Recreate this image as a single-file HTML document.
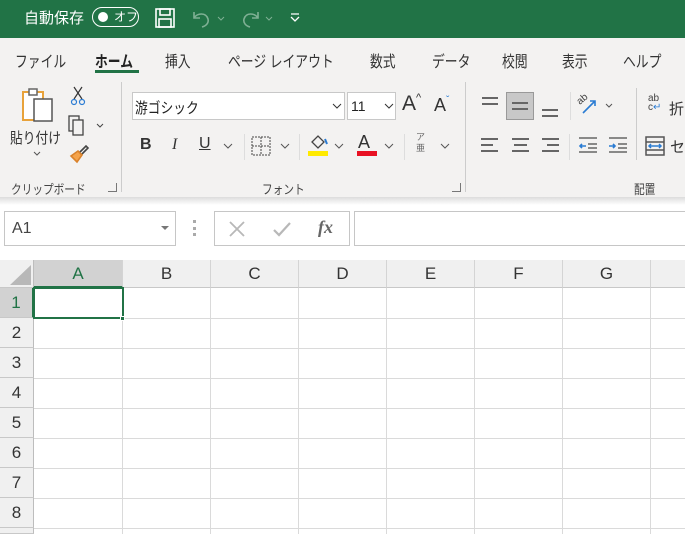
<!DOCTYPE html>
<html><head><meta charset="utf-8"><style>
*{margin:0;padding:0;box-sizing:border-box}
html,body{width:685px;height:534px;overflow:hidden}
body{background:#fff;font-family:"Liberation Sans","Noto Sans CJK JP",sans-serif;position:relative;color:#262626}
.a{position:absolute;white-space:nowrap}
.t{font-size:16px;color:#333;transform:scaleX(0.8);transform-origin:left top}
.g{font-size:13px;color:#444;transform:scaleX(0.82);transform-origin:left top}
.ch{position:absolute;top:260px;height:28px;border-right:1px solid #d4d4d4;border-bottom:1px solid #c8c8c8;background:#f0f0f0;font-size:17px;text-align:center;line-height:28px;color:#333}
.rh{position:absolute;left:0;width:34px;height:30px;border-bottom:1px solid #c8c8c8;border-right:1px solid #bdbdbd;background:#f0f0f0;font-size:17px;text-align:center;line-height:30px;color:#333}
.hl{position:absolute;left:34px;right:0;height:1px;background:#dadada}
.vl{position:absolute;top:288px;height:246px;width:1px;background:#dadada}
.bar{position:absolute;height:2px;background:#666}
</style></head><body>
<div class="a" style="left:0;top:0;width:685px;height:38px;background:#217346"></div>
<div class="a" style="left:24px;top:7px;color:#fff;font-size:15px">自動保存</div>
<div class="a" style="left:92px;top:7px;width:47px;height:20px;border:1.5px solid #fff;border-radius:10px"></div>
<div class="a" style="left:98px;top:12px;width:10px;height:10px;border-radius:5px;background:#fff"></div>
<div class="a" style="left:114px;top:8px;color:#fff;font-size:12px">オフ</div>
<svg class="a" style="left:154px;top:7px" width="22" height="22" viewBox="0 0 22 22" fill="none" stroke="#fff" stroke-width="1.6"><rect x="2" y="2" width="18" height="18"/><rect x="6" y="2" width="10" height="6"/><rect x="5" y="12" width="12" height="8"/></svg>
<svg class="a" style="left:190px;top:8px" width="40" height="20" fill="none" stroke="#7fb094" stroke-width="1.6"><path d="M4 4v6h6M4 10c3-5 12-6 14 1 1 4-2 7-6 8"/><path d="M28 9l3 3 3-3" stroke-width="1"/></svg>
<svg class="a" style="left:238px;top:8px" width="40" height="20" fill="none" stroke="#7fb094" stroke-width="1.6"><path d="M20 4v6h-6M20 10c-3-5-12-6-14 1-1 4 2 7 6 8"/><path d="M28 9l3 3 3-3" stroke-width="1"/></svg>
<svg class="a" style="left:289px;top:12px" width="12" height="12" fill="none" stroke="#fff" stroke-width="1.3"><path d="M2 2h8M2 5l4 4 4-4"/></svg>
<div class="a" style="left:0;top:38px;width:685px;height:162px;background:#f3f2f1"></div>
<div class="a" style="left:0;top:197px;width:685px;height:8px;background:linear-gradient(#dcdcdc,#fff)"></div>
<div class="a t" style="left:15px;top:48px">ファイル</div>
<div class="a t" style="left:95px;top:48px;font-weight:bold;color:#222">ホーム</div>
<div class="a" style="left:95px;top:70px;width:44px;height:3px;background:#217346"></div>
<div class="a t" style="left:165px;top:48px">挿入</div>
<div class="a t" style="left:228px;top:48px">ページ レイアウト</div>
<div class="a t" style="left:370px;top:48px">数式</div>
<div class="a t" style="left:432px;top:48px">データ</div>
<div class="a t" style="left:502px;top:48px">校閲</div>
<div class="a t" style="left:562px;top:48px">表示</div>
<div class="a t" style="left:623px;top:48px">ヘルプ</div>
<svg class="a" style="left:20px;top:86px" width="40" height="38" fill="none"><rect x="3" y="6" width="20" height="28" stroke="#e8a23a" stroke-width="2" fill="#fff"/><rect x="9" y="3" width="8" height="6" stroke="#666" stroke-width="1.5" fill="#fff"/><rect x="14" y="13" width="18" height="22" stroke="#555" stroke-width="1.5" fill="#fff"/></svg>
<div class="a" style="left:10px;top:127px;font-size:15px;color:#333;transform:scaleX(0.85);transform-origin:left top">貼り付け</div>
<svg class="a" style="left:32px;top:150px" width="10" height="8" fill="none" stroke="#555"><path d="M2 2l3 3 3-3"/></svg>
<svg class="a" style="left:70px;top:86px" width="16" height="20" fill="none" stroke="#333" stroke-width="1.2"><path d="M4 1l8 12M12 1l-8 12"/><circle cx="4" cy="16" r="2.5" stroke="#2b7cd3"/><circle cx="12" cy="16" r="2.5" stroke="#2b7cd3"/></svg>
<svg class="a" style="left:68px;top:115px" width="40" height="22" fill="none" stroke="#444" stroke-width="1.3"><rect x="1" y="1" width="10" height="15"/><rect x="5" y="5" width="10" height="15" fill="#f3f2f1"/><path d="M29 9l3 3 3-3" stroke-width="1"/></svg>
<svg class="a" style="left:68px;top:144px" width="22" height="20" fill="none" stroke-width="1.6"><path d="M12 8l6-6 2 2-6 6" stroke="#444"/><path d="M3 12l7-5 4 4-5 7z" fill="#f5a34a" stroke="#d9822b"/></svg>
<div class="a g" style="left:11px;top:179px">クリップボード</div>
<div class="a" style="left:108px;top:183px;width:9px;height:9px;border:1px solid #777;border-width:0 1px 1px 0"></div>
<div class="a" style="left:121px;top:82px;width:1px;height:110px;background:#ccc"></div>
<div class="a" style="left:132px;top:92px;width:213px;height:28px;background:#fff;border:1px solid #c8c8c8"></div>
<div class="a" style="left:135px;top:97px;font-size:15px;color:#222;transform:scaleX(0.85);transform-origin:left top">游ゴシック</div>
<svg class="a" style="left:332px;top:102px" width="10" height="8" fill="none" stroke="#333"><path d="M1 2l4 4 4-4"/></svg>
<div class="a" style="left:347px;top:92px;width:49px;height:28px;background:#fff;border:1px solid #c8c8c8"></div>
<div class="a" style="left:351px;top:98px;font-size:14px;color:#222">11</div>
<svg class="a" style="left:384px;top:102px" width="10" height="8" fill="none" stroke="#333"><path d="M1 2l4 4 4-4"/></svg>
<div class="a" style="left:402px;top:92px;font-size:21px;color:#333">A<span style="font-size:11px;vertical-align:top">^</span></div>
<div class="a" style="left:434px;top:95px;font-size:18px;color:#333">A<span style="font-size:10px;vertical-align:top;color:#2b7cd3">ˇ</span></div>
<div class="a" style="left:140px;top:136px;font-size:16px;font-weight:bold;color:#333">B</div>
<div class="a" style="left:172px;top:136px;font-size:16px;font-style:italic;font-family:'Liberation Serif',serif;color:#333">I</div>
<div class="a" style="left:199px;top:135px;font-size:16px;text-decoration:underline;color:#333">U</div>
<svg class="a" style="left:223px;top:142px" width="10" height="8" fill="none" stroke="#555"><path d="M1 2l4 4 4-4"/></svg>
<div class="a" style="left:244px;top:134px;width:1px;height:26px;background:#ddd"></div>
<svg class="a" style="left:251px;top:136px" width="20" height="20" fill="none" stroke="#444" stroke-dasharray="2 1"><rect x="1" y="1" width="18" height="18"/><path d="M10 1v18M1 10h18"/></svg>
<svg class="a" style="left:280px;top:142px" width="10" height="8" fill="none" stroke="#555"><path d="M1 2l4 4 4-4"/></svg>
<div class="a" style="left:299px;top:134px;width:1px;height:26px;background:#ddd"></div>
<svg class="a" style="left:308px;top:133px" width="22" height="18" fill="none" stroke="#444" stroke-width="1.3"><path d="M4 9l6-6 6 6-6 6z"/><path d="M17 6l2 5" stroke="#2b7cd3" stroke-width="2"/></svg>
<div class="a" style="left:308px;top:151px;width:20px;height:5px;background:#ffea00"></div>
<svg class="a" style="left:334px;top:142px" width="10" height="8" fill="none" stroke="#555"><path d="M1 2l4 4 4-4"/></svg>
<div class="a" style="left:358px;top:132px;font-size:18px;color:#333">A</div>
<div class="a" style="left:357px;top:151px;width:20px;height:5px;background:#e81123"></div>
<svg class="a" style="left:384px;top:142px" width="10" height="8" fill="none" stroke="#555"><path d="M1 2l4 4 4-4"/></svg>
<div class="a" style="left:404px;top:134px;width:1px;height:26px;background:#ddd"></div>
<div class="a" style="left:416px;top:132px;font-size:9px;line-height:11px;color:#666;text-align:center">ア<br>亜</div>
<svg class="a" style="left:440px;top:142px" width="10" height="8" fill="none" stroke="#555"><path d="M1 2l4 4 4-4"/></svg>
<div class="a g" style="left:262px;top:179px">フォント</div>
<div class="a" style="left:452px;top:183px;width:9px;height:9px;border:1px solid #777;border-width:0 1px 1px 0"></div>
<div class="a" style="left:465px;top:82px;width:1px;height:110px;background:#ccc"></div>
<div class="bar" style="left:482px;top:97px;width:16px"></div><div class="bar" style="left:482px;top:103px;width:16px"></div>
<div class="a" style="left:506px;top:92px;width:28px;height:28px;background:#c8c8c8;border:1px solid #999"></div>
<div class="bar" style="left:512px;top:102px;width:16px"></div><div class="bar" style="left:512px;top:108px;width:16px"></div>
<div class="bar" style="left:542px;top:109px;width:16px"></div><div class="bar" style="left:542px;top:115px;width:16px"></div>
<div class="a" style="left:570px;top:92px;width:1px;height:28px;background:#ddd"></div>
<div class="a" style="left:577px;top:94px;font-size:10px;color:#444;transform:rotate(-40deg)">ab</div>
<svg class="a" style="left:580px;top:96px" width="40" height="20" fill="none" stroke="#2b7cd3" stroke-width="1.6"><path d="M3 17L15 5M10 5h5v5"/><path d="M26 8l3 3 3-3" stroke="#555" stroke-width="1"/></svg>
<div class="bar" style="left:481px;top:138px;width:17px"></div><div class="bar" style="left:481px;top:144px;width:12px"></div><div class="bar" style="left:481px;top:150px;width:17px"></div>
<div class="bar" style="left:512px;top:138px;width:17px"></div><div class="bar" style="left:514px;top:144px;width:13px"></div><div class="bar" style="left:512px;top:150px;width:17px"></div>
<div class="bar" style="left:542px;top:138px;width:17px"></div><div class="bar" style="left:547px;top:144px;width:12px"></div><div class="bar" style="left:542px;top:150px;width:17px"></div>
<div class="a" style="left:569px;top:134px;width:1px;height:26px;background:#ddd"></div>
<svg class="a" style="left:578px;top:136px" width="20" height="18" fill="none" stroke-width="1.6"><path d="M1 2h18M10 8h9M10 12h9M1 16h18" stroke="#666"/><path d="M8 10H2M4 8l-2 2 2 2" stroke="#2b7cd3"/></svg>
<svg class="a" style="left:608px;top:136px" width="20" height="18" fill="none" stroke-width="1.6"><path d="M1 2h18M10 8h9M10 12h9M1 16h18" stroke="#666"/><path d="M1 10h6M5 8l2 2-2 2" stroke="#2b7cd3"/></svg>
<div class="a" style="left:636px;top:88px;width:1px;height:72px;background:#ccc"></div>
<div class="a" style="left:648px;top:94px;font-size:10px;line-height:9px;color:#444">ab<br>c<span style="color:#2b7cd3">↵</span></div>
<div class="a" style="left:669px;top:98px;font-size:15px;color:#333">折</div>
<svg class="a" style="left:645px;top:136px" width="20" height="20" fill="none" stroke="#2b7cd3" stroke-width="1.5"><rect x="1" y="1" width="18" height="18" stroke="#555"/><path d="M1 6h18M1 14h18" stroke="#555"/><path d="M4 10h12M6 8l-2 2 2 2M14 8l2 2-2 2"/></svg>
<div class="a" style="left:670px;top:136px;font-size:15px;color:#333">セ</div>
<div class="a g" style="left:634px;top:179px">配置</div>
<div class="a" style="left:4px;top:211px;width:172px;height:35px;background:#fff;border:1px solid #c6c6c6"></div>
<div class="a" style="left:12px;top:220px;font-size:16px;color:#444">A1</div>
<svg class="a" style="left:160px;top:225px" width="10" height="6"><path d="M1 1h8l-4 4z" fill="#777"/></svg>
<div class="a" style="left:193px;top:220px;width:3px;height:16px;border-left:3px dotted #aaa"></div>
<div class="a" style="left:214px;top:211px;width:136px;height:35px;background:#fff;border:1px solid #c6c6c6"></div>
<svg class="a" style="left:228px;top:220px" width="18" height="18" fill="none" stroke="#b8b8b8" stroke-width="1.8"><path d="M2 2l14 14M16 2L2 16"/></svg>
<svg class="a" style="left:272px;top:220px" width="20" height="18" fill="none" stroke="#b8b8b8" stroke-width="2.2"><path d="M2 10l5 5L18 3"/></svg>
<div class="a" style="left:318px;top:217px;font-size:18px;font-style:italic;font-family:'Liberation Serif',serif;font-weight:bold;color:#666">fx</div>
<div class="a" style="left:354px;top:211px;width:340px;height:35px;background:#fff;border:1px solid #c6c6c6"></div>
<div class="a" style="left:0;top:260px;width:34px;height:28px;background:#f0f0f0;border-right:1px solid #bdbdbd;border-bottom:1px solid #c8c8c8"></div>
<svg class="a" style="left:8px;top:264px" width="24" height="22"><path d="M23 1V21H2z" fill="#b8b8b8"/></svg>
<div class="ch" style="left:34px;width:89px;background:#d2d2d2;color:#217346;border-bottom:2px solid #217346">A</div>
<div class="ch" style="left:123px;width:88px">B</div>
<div class="ch" style="left:211px;width:88px">C</div>
<div class="ch" style="left:299px;width:88px">D</div>
<div class="ch" style="left:387px;width:88px">E</div>
<div class="ch" style="left:475px;width:88px">F</div>
<div class="ch" style="left:563px;width:88px">G</div>
<div class="ch" style="left:651px;width:40px"></div>
<div class="rh" style="top:288px;background:#d2d2d2;color:#217346;border-right:2px solid #217346">1</div>
<div class="rh" style="top:318px">2</div>
<div class="rh" style="top:348px">3</div>
<div class="rh" style="top:378px">4</div>
<div class="rh" style="top:408px">5</div>
<div class="rh" style="top:438px">6</div>
<div class="rh" style="top:468px">7</div>
<div class="rh" style="top:498px">8</div>
<div class="rh" style="top:528px;height:6px"></div>
<div class="hl" style="top:318px"></div><div class="hl" style="top:348px"></div><div class="hl" style="top:378px"></div><div class="hl" style="top:408px"></div><div class="hl" style="top:438px"></div><div class="hl" style="top:468px"></div><div class="hl" style="top:498px"></div><div class="hl" style="top:528px"></div>
<div class="vl" style="left:122px"></div><div class="vl" style="left:210px"></div><div class="vl" style="left:298px"></div><div class="vl" style="left:386px"></div><div class="vl" style="left:474px"></div><div class="vl" style="left:562px"></div><div class="vl" style="left:650px"></div>
<div class="a" style="left:33px;top:287px;width:91px;height:32px;border:2px solid #217346"></div>
<div class="a" style="left:120px;top:316px;width:5px;height:5px;background:#217346;border:1px solid #fff"></div>
</body></html>
